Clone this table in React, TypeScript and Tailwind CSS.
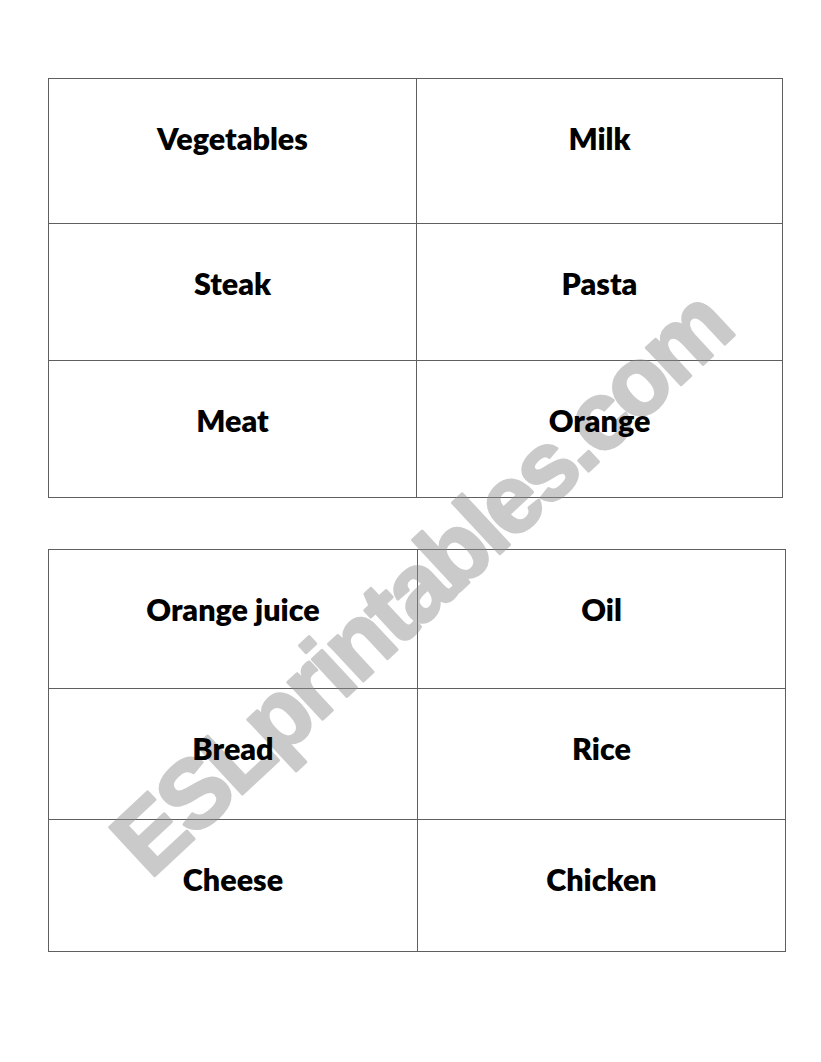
import React from 'react';

type Card = { label: string };

const firstSheet: Card[][] = [
  [{ label: 'Vegetables' }, { label: 'Milk' }],
  [{ label: 'Steak' }, { label: 'Pasta' }],
  [{ label: 'Meat' }, { label: 'Orange' }],
];

const secondSheet: Card[][] = [
  [{ label: 'Orange juice' }, { label: 'Oil' }],
  [{ label: 'Bread' }, { label: 'Rice' }],
  [{ label: 'Cheese' }, { label: 'Chicken' }],
];

function Cell({ label, className }: { label: string; className: string }) {
  return (
    <div className={`border-r border-b border-[#5f5f5f] pt-[41px] text-center ${className}`}>
      <span className="relative z-10 text-[30.5px] leading-[36px] font-extrabold text-black">{label}</span>
    </div>
  );
}

export default function App() {
  return (
    <div
      className="relative min-h-[1062px] w-[821px] overflow-hidden bg-white pt-[78px] pl-[48px]"
      style={{ fontFamily: 'Lato, "Open Sans", sans-serif' }}
    >
      {/* first set of cards */}
      <div className="grid w-[735px] grid-cols-[368px_366px] border-t border-l border-[#5f5f5f]">
        <Cell label={firstSheet[0][0].label} className="h-[145px]" />
        <Cell label={firstSheet[0][1].label} className="h-[145px]" />
        <Cell label={firstSheet[1][0].label} className="h-[137px]" />
        <Cell label={firstSheet[1][1].label} className="h-[137px]" />
        <Cell label={firstSheet[2][0].label} className="h-[137px]" />
        <Cell label={firstSheet[2][1].label} className="h-[137px]" />
      </div>

      {/* second set of cards */}
      <div className="mt-[51px] grid w-[738px] grid-cols-[369px_368px] border-t border-l border-[#5f5f5f]">
        <Cell label={secondSheet[0][0].label} className="h-[139px]" />
        <Cell label={secondSheet[0][1].label} className="h-[139px]" />
        <Cell label={secondSheet[1][0].label} className="h-[131px]" />
        <Cell label={secondSheet[1][1].label} className="h-[131px]" />
        <Cell label={secondSheet[2][0].label} className="h-[132px]" />
        <Cell label={secondSheet[2][1].label} className="h-[132px]" />
      </div>

      {/* watermark */}
      <svg className="pointer-events-none absolute top-0 left-0" width="821" height="1062" viewBox="0 0 821 1062">
        <text
          x="0"
          y="0"
          transform="translate(150 880) rotate(-43)"
          textLength="805"
          lengthAdjust="spacing"
          fontFamily='"Liberation Sans", Arial, sans-serif'
          fontWeight="700"
          fontSize="96"
          fill="#8c8c8c"
          stroke="#8c8c8c"
          strokeWidth="3"
          strokeLinejoin="round"
          opacity="0.45"
        >
          ESLprintables.com
        </text>
      </svg>
    </div>
  );
}
